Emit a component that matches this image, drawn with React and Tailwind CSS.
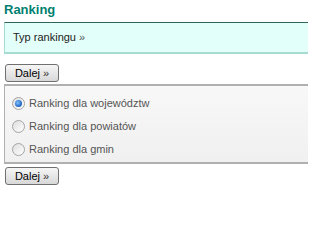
export default function App() {
  const opts = ['Ranking dla województw', 'Ranking dla powiatów', 'Ranking dla gmin'];
  const btn = (
    <button className="block h-[18px] w-[54px] ml-[5px] rounded-[3px] border border-[#707070] bg-gradient-to-b from-[#f6f6f6] to-[#d8d8d8] text-[11px] leading-none text-black">
      Dalej <span className="text-[#333]">»</span>
    </button>
  );
  return (
    <div className="w-[308px] h-[223px] bg-white overflow-hidden font-['Liberation_Sans',Arial,sans-serif]">
      <h1 className="pl-[4px] pt-[1px] h-[22px] text-[13px] font-bold text-[#008070] leading-[18px]">Ranking</h1>
      <div className="ml-[4px] h-[32px] border-t border-t-[#2f6657] border-l border-l-[#a8dcd2] border-b-2 border-b-[#a8dcd2] bg-[#e2fff9] pl-[8px] flex items-center text-[11px] text-[#222]">
        Typ rankingu <span className="ml-[3px] text-[#555]">»</span>
      </div>
      <div className="pt-[10px]">{btn}</div>
      <div className="ml-[4px] mt-[2px] h-[80px] border-t-2 border-b-2 border-l border-[#b0b0b0] bg-gradient-to-b from-[#f8f8f8] to-[#f0f0f0] pt-[9px] pl-[7px] flex flex-col gap-[7px]">
        {opts.map((o, i) => (
          <label key={o} className="flex items-center h-[16px] text-[11px] text-[#555]">
            <span className="w-[13px] h-[13px] mr-[4px] rounded-full border border-[#a4a4a4] bg-gradient-to-br from-[#dedede] to-white flex items-center justify-center">
              {i === 0 && <span className="w-[7px] h-[7px] rounded-full bg-[radial-gradient(circle_at_40%_40%,#7fc4ff,#1a5fbf_70%)]" />}
            </span>
            {o}
          </label>
        ))}
      </div>
      <div className="pt-[3px]">{btn}</div>
    </div>
  );
}
